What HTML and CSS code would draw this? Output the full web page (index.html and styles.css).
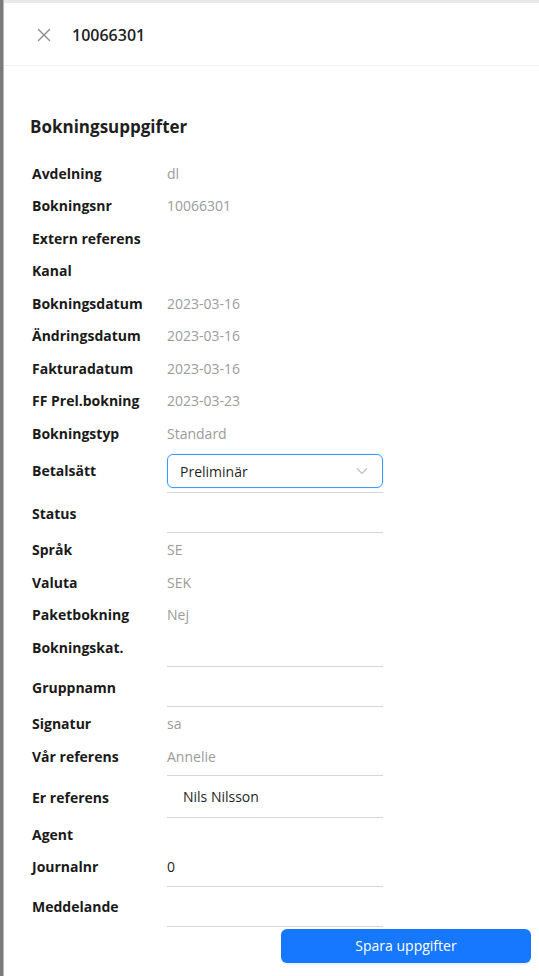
FILE: index.html
```html
<!DOCTYPE html>
<html lang="sv">
<head>
<meta charset="utf-8">
<title>10066301</title>
<link rel="stylesheet" href="styles.css">
</head>
<body>
<div class="page">
  <div class="edge"></div>
  <div class="drawer">
    <header class="head">
      <svg class="close" width="14" height="14" viewBox="0 0 14 14" aria-hidden="true">
        <path d="M1.5 1.5 L12.5 12.5 M12.5 1.5 L1.5 12.5" stroke="#8c8c8c" stroke-width="1.4" fill="none" stroke-linecap="round"/>
      </svg>
      <span class="head-title">10066301</span>
    </header>
    <main class="body">
      <h2 class="title">Bokningsuppgifter</h2>
      <div class="rows">
        <div class="row"><div class="lbl">Avdelning</div><div class="val">dl</div></div>
        <div class="row"><div class="lbl">Bokningsnr</div><div class="val">10066301</div></div>
        <div class="row"><div class="lbl">Extern referens</div><div class="val"></div></div>
        <div class="row"><div class="lbl">Kanal</div><div class="val"></div></div>
        <div class="row"><div class="lbl">Bokningsdatum</div><div class="val">2023-03-16</div></div>
        <div class="row"><div class="lbl">Ändringsdatum</div><div class="val">2023-03-16</div></div>
        <div class="row"><div class="lbl">Fakturadatum</div><div class="val">2023-03-16</div></div>
        <div class="row"><div class="lbl">FF Prel.bokning</div><div class="val">2023-03-23</div></div>
        <div class="row"><div class="lbl">Bokningstyp</div><div class="val">Standard</div></div>
        <div class="row row-select">
          <div class="lbl">Betalsätt</div>
          <div class="field">
            <div class="select">
              <span>Preliminär</span>
              <svg width="12" height="8" viewBox="0 0 12 8" aria-hidden="true"><path d="M1 1.5 L6 6.5 L11 1.5" stroke="#bfbfbf" stroke-width="1.2" fill="none"/></svg>
            </div>
          </div>
        </div>
        <div class="row row-tall row-status"><div class="lbl">Status</div><div class="field"></div></div>
        <div class="row"><div class="lbl">Språk</div><div class="val">SE</div></div>
        <div class="row"><div class="lbl">Valuta</div><div class="val">SEK</div></div>
        <div class="row"><div class="lbl">Paketbokning</div><div class="val">Nej</div></div>
        <div class="row row-short"><div class="lbl">Bokningskat.</div><div class="field"></div></div>
        <div class="row row-tall"><div class="lbl">Gruppnamn</div><div class="field"></div></div>
        <div class="row"><div class="lbl">Signatur</div><div class="val">sa</div></div>
        <div class="row row-short"><div class="lbl">Vår referens</div><div class="field val">Annelie</div></div>
        <div class="row row-tall row-er"><div class="lbl">Er referens</div><div class="field input">Nils Nilsson</div></div>
        <div class="row"><div class="lbl">Agent</div><div class="val"></div></div>
        <div class="row row-short"><div class="lbl">Journalnr</div><div class="field dark">0</div></div>
        <div class="row row-tall"><div class="lbl">Meddelande</div><div class="field"></div></div>
      </div>
      <div class="footer">
        <button class="btn" type="button">Spara uppgifter</button>
      </div>
    </main>
  </div>
</div>
</body>
</html>
```
FILE: styles.css
```css
* { box-sizing: border-box; }
html, body {
  margin: 0;
  padding: 0;
}
body {
  font-family: "Open Sans", "Noto Sans", sans-serif;
  font-size: 14px;
  color: #1f1f1f;
  background: #ffffff;
  overflow: hidden;
}
.page {
  display: flex;
  height: 976px;
}
.edge {
  width: 4px;
  height: 976px;
  flex: 0 0 4px;
  background: #7a7a7a;
  border-right: 1px solid #b8b8b8;
}
.drawer {
  flex: 1;
  border-top: 3px solid #e9e9e9;
  display: flex;
  flex-direction: column;
}
.head {
  height: 63px;
  border-bottom: 1px solid #f0f0f0;
  display: flex;
  align-items: center;
  padding-left: 33px;
  padding-top: 2px;
  gap: 21px;
}
.close { display: block; }
.head-title {
  font-size: 16px;
  font-weight: 600;
  color: #1f1f1f;
}
.body {
  padding: 49px 8px 0 26px;
}
.title {
  margin: 0;
  font-size: 17px;
  font-weight: 700;
  line-height: 24px;
  color: #1f1f1f;
}
.rows {
  margin-top: 17.75px;
  padding-left: 2px;
  display: flex;
  flex-direction: column;
}
.row {
  display: grid;
  grid-template-columns: 135px 216px;
  height: 32.5px;
  align-items: center;
}
.lbl {
  font-weight: 700;
  color: #1a1a1a;
  white-space: nowrap;
}
.val {
  color: #9b9b9b;
}
.field {
  border-bottom: 1px solid #d6d6d6;
}
.row-short {
  height: 36.5px;
  align-items: start;
}
.row-short .lbl,
.row-short .field {
  line-height: 33px;
}
.row-short .field {
  height: 36.5px;
}
.row-tall {
  height: 40px;
}
.row-tall .field {
  height: 40px;
  display: flex;
  align-items: center;
}
.row-status,
.row-status .field {
  height: 40.5px;
}
.row-er,
.row-er .field {
  height: 41.5px;
}
.input {
  padding-left: 16px;
  color: #1f1f1f;
}
.dark { color: #1f1f1f; }
.row-select {
  height: 43.5px;
  align-items: start;
}
.row-select .lbl {
  line-height: 44px;
}
.row-select .field {
  height: 43.5px;
  padding-top: 4.75px;
}
.select {
  height: 34px;
  border: 1px solid #4096ff;
  border-radius: 6px;
  display: flex;
  align-items: center;
  justify-content: space-between;
  padding: 0 14px 0 12px;
  color: #1f1f1f;
  box-shadow: 0 0 0 1px rgba(5,145,255,0.08);
}
.select svg { display: block; }
.footer {
  display: flex;
  justify-content: flex-end;
  margin-top: 2px;
}
.btn {
  width: 250px;
  height: 34px;
  border: none;
  border-radius: 6px;
  background: #1677ff;
  color: #ffffff;
  font-family: "Open Sans", "Noto Sans", sans-serif;
  font-size: 14px;
  box-shadow: 0 2px 0 rgba(5,145,255,0.1);
}
```
